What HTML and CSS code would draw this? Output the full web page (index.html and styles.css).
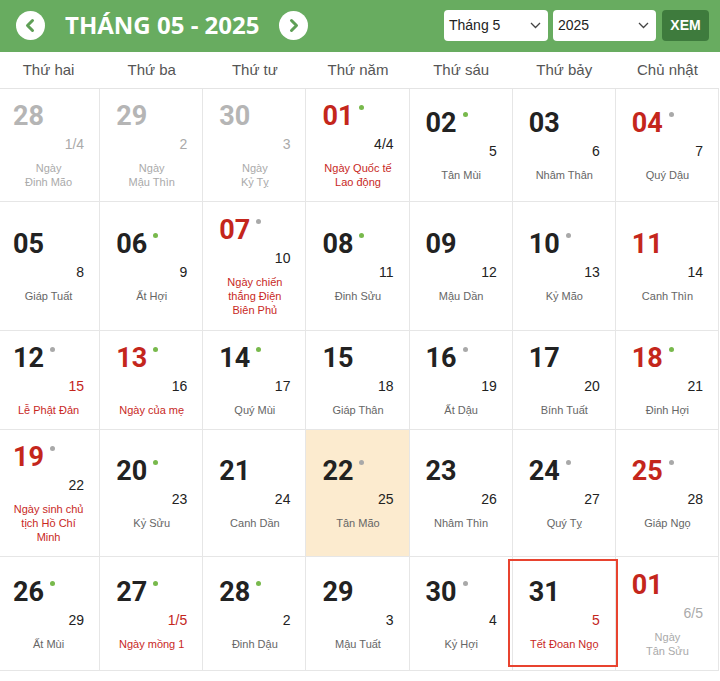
FILE: index.html
```html
<!DOCTYPE html>
<html lang="vi">
<head>
<meta charset="utf-8">
<title>Lịch tháng 05 - 2025</title>
<link rel="stylesheet" href="styles.css">
</head>
<body>
<div class="topbar">
  <span class="nav"><svg width="29" height="29" viewBox="0 0 29 29"><circle cx="14.5" cy="14.5" r="14.5" fill="#fff"/><path d="M16.5 9.5 L11.5 14.5 L16.5 19.5" fill="none" stroke="#5f9f56" stroke-width="3" stroke-linecap="round" stroke-linejoin="round"/></svg></span>
  <h1 class="title">THÁNG 05 - 2025</h1>
  <span class="nav"><svg width="29" height="29" viewBox="0 0 29 29"><circle cx="14.5" cy="14.5" r="14.5" fill="#fff"/><path d="M12.5 9.5 L17.5 14.5 L12.5 19.5" fill="none" stroke="#5f9f56" stroke-width="3" stroke-linecap="round" stroke-linejoin="round"/></svg></span>
  <div class="controls">
    <div class="select sel-month">Tháng 5<svg class="caret" width="11" height="7" viewBox="0 0 11 7"><path d="M1 1 L5.5 5.5 L10 1" fill="none" stroke="#444" stroke-width="1.3"/></svg></div>
    <div class="select sel-year">2025<svg class="caret" width="11" height="7" viewBox="0 0 11 7"><path d="M1 1 L5.5 5.5 L10 1" fill="none" stroke="#444" stroke-width="1.3"/></svg></div>
    <button class="btn">XEM</button>
  </div>
</div>

<div class="calendar">
  <div class="wd">Thứ hai</div><div class="wd">Thứ ba</div><div class="wd">Thứ tư</div><div class="wd">Thứ năm</div><div class="wd">Thứ sáu</div><div class="wd">Thứ bảy</div><div class="wd">Chủ nhật</div>

  <div class="cell out"><div class="num">28</div><div class="lunar">1/4</div><div class="txt">Ngày<br>Đinh Mão</div></div>
  <div class="cell out"><div class="num">29</div><div class="lunar">2</div><div class="txt">Ngày<br>Mậu Thìn</div></div>
  <div class="cell out"><div class="num">30</div><div class="lunar">3</div><div class="txt">Ngày<br>Kỷ Tỵ</div></div>
  <div class="cell"><div class="num red">01<i class="dot g"></i></div><div class="lunar">4/4</div><div class="txt hol">Ngày Quốc tế<br>Lao động</div></div>
  <div class="cell"><div class="num">02<i class="dot g"></i></div><div class="lunar">5</div><div class="txt">Tân Mùi</div></div>
  <div class="cell"><div class="num">03</div><div class="lunar">6</div><div class="txt">Nhâm Thân</div></div>
  <div class="cell"><div class="num red">04<i class="dot s"></i></div><div class="lunar">7</div><div class="txt">Quý Dậu</div></div>

  <div class="cell"><div class="num">05</div><div class="lunar">8</div><div class="txt">Giáp Tuất</div></div>
  <div class="cell"><div class="num">06<i class="dot g"></i></div><div class="lunar">9</div><div class="txt">Ất Hợi</div></div>
  <div class="cell"><div class="num red">07<i class="dot s"></i></div><div class="lunar">10</div><div class="txt hol">Ngày chiến<br>thắng Điện<br>Biên Phủ</div></div>
  <div class="cell"><div class="num">08<i class="dot g"></i></div><div class="lunar">11</div><div class="txt">Đinh Sửu</div></div>
  <div class="cell"><div class="num">09</div><div class="lunar">12</div><div class="txt">Mậu Dần</div></div>
  <div class="cell"><div class="num">10<i class="dot s"></i></div><div class="lunar">13</div><div class="txt">Kỷ Mão</div></div>
  <div class="cell"><div class="num red">11</div><div class="lunar">14</div><div class="txt">Canh Thìn</div></div>

  <div class="cell"><div class="num">12<i class="dot s"></i></div><div class="lunar red">15</div><div class="txt hol">Lễ Phật Đản</div></div>
  <div class="cell"><div class="num red">13<i class="dot g"></i></div><div class="lunar">16</div><div class="txt hol">Ngày của mẹ</div></div>
  <div class="cell"><div class="num">14<i class="dot g"></i></div><div class="lunar">17</div><div class="txt">Quý Mùi</div></div>
  <div class="cell"><div class="num">15</div><div class="lunar">18</div><div class="txt">Giáp Thân</div></div>
  <div class="cell"><div class="num">16<i class="dot s"></i></div><div class="lunar">19</div><div class="txt">Ất Dậu</div></div>
  <div class="cell"><div class="num">17</div><div class="lunar">20</div><div class="txt">Bính Tuất</div></div>
  <div class="cell"><div class="num red">18<i class="dot g"></i></div><div class="lunar">21</div><div class="txt">Đinh Hợi</div></div>

  <div class="cell"><div class="num red">19<i class="dot s"></i></div><div class="lunar">22</div><div class="txt hol">Ngày sinh chủ<br>tịch Hồ Chí<br>Minh</div></div>
  <div class="cell"><div class="num">20<i class="dot g"></i></div><div class="lunar">23</div><div class="txt">Kỷ Sửu</div></div>
  <div class="cell"><div class="num">21</div><div class="lunar">24</div><div class="txt">Canh Dần</div></div>
  <div class="cell today"><div class="num">22<i class="dot s"></i></div><div class="lunar">25</div><div class="txt">Tân Mão</div></div>
  <div class="cell"><div class="num">23</div><div class="lunar">26</div><div class="txt">Nhâm Thìn</div></div>
  <div class="cell"><div class="num">24<i class="dot s"></i></div><div class="lunar">27</div><div class="txt">Quý Tỵ</div></div>
  <div class="cell"><div class="num red">25<i class="dot s"></i></div><div class="lunar">28</div><div class="txt">Giáp Ngọ</div></div>

  <div class="cell"><div class="num">26<i class="dot g"></i></div><div class="lunar">29</div><div class="txt">Ất Mùi</div></div>
  <div class="cell"><div class="num">27<i class="dot g"></i></div><div class="lunar red">1/5</div><div class="txt hol">Ngày mồng 1</div></div>
  <div class="cell"><div class="num">28<i class="dot g"></i></div><div class="lunar">2</div><div class="txt">Đinh Dậu</div></div>
  <div class="cell"><div class="num">29</div><div class="lunar">3</div><div class="txt">Mậu Tuất</div></div>
  <div class="cell"><div class="num">30<i class="dot s"></i></div><div class="lunar">4</div><div class="txt">Kỷ Hợi</div></div>
  <div class="cell selected"><div class="num">31</div><div class="lunar red">5</div><div class="txt hol">Tết Đoan Ngọ</div></div>
  <div class="cell out"><div class="num red">01</div><div class="lunar">6/5</div><div class="txt">Ngày<br>Tân Sửu</div></div>
</div>
</body>
</html>
```

FILE: styles.css
```css
html, body {
  margin: 0;
  padding: 0;
  background: #fff;
  overflow: hidden;
}
body {
  width: 720px;
  font-family: "Liberation Sans", Arial, sans-serif;
}

.topbar {
  height: 52px;
  box-sizing: border-box;
  background: #68ac60;
  display: flex;
  align-items: center;
  padding: 0 11px 2px 16px;
}
.nav {
  width: 29px;
  height: 29px;
  display: block;
}
.nav svg { display: block; }
.title {
  margin: 0 20px;
  font-family: "Open Sans", sans-serif;
  font-weight: 700;
  font-size: 24px;
  line-height: 30px;
  color: #fff;
  letter-spacing: 0;
}
.controls {
  margin-left: auto;
  display: flex;
  align-items: center;
}
.select {
  height: 31px;
  box-sizing: border-box;
  background: #fff;
  border-radius: 4px;
  display: flex;
  align-items: center;
  justify-content: space-between;
  padding: 0 7px 0 5px;
  font-size: 14px;
  color: #222;
}
.sel-month { width: 104px; }
.sel-year { width: 103px; margin-left: 5px; }
.caret { display: block; }
.btn {
  margin-left: 6px;
  width: 47px;
  height: 31px;
  border: 0;
  border-radius: 4px;
  background: #3e7b3d;
  color: #fff;
  font-family: "Liberation Sans", Arial, sans-serif;
  font-weight: 700;
  font-size: 14px;
  padding: 0;
}

.calendar {
  width: 722px;
  margin-left: -3px;
  display: grid;
  grid-template-columns: repeat(7, 1fr);
  grid-template-rows: 37px 113px 129px 99px 127px 114px;
}
.wd {
  display: flex;
  align-items: center;
  justify-content: center;
  font-size: 15px;
  color: #555;
  border-bottom: 1px solid #e4e4e4;
  padding-bottom: 1px;
}
.cell {
  position: relative;
  display: flex;
  flex-direction: column;
  justify-content: center;
  padding: 0 15px 0 16px;
  border-right: 1px solid #e6e6e6;
  border-bottom: 1px solid #e6e6e6;
  min-width: 0;
}
.num {
  display: flex;
  align-items: flex-start;
  font-family: Roboto, "Liberation Sans", sans-serif;
  font-weight: 700;
  font-size: 27px;
  line-height: 30px;
  color: #222;
}
.dot {
  width: 5px;
  height: 5px;
  border-radius: 50%;
  margin-left: 6px;
  margin-top: 4px;
}
.dot.g { background: #78b94c; }
.dot.s { background: #a9a9a9; }
.lunar {
  margin-top: 4px;
  text-align: right;
  font-size: 14px;
  line-height: 18px;
  color: #222;
}
.txt {
  margin: 8px -12px 0;
  text-align: center;
  font-size: 11px;
  line-height: 14px;
  color: #666;
}
.red { color: #c4261c; }
.num.red { color: #c4261c; }
.txt.hol { color: #c8281e; }

.out .num { color: #b5b5b5; }
.out .num.red { color: #c4261c; }
.out .lunar { color: #aaa; }
.out .txt { color: #aaa; }

.today { background: #fcebcf; }
.selected::after {
  content: "";
  position: absolute;
  left: -5px;
  right: -3px;
  top: 2px;
  bottom: 3px;
  border: 2px solid #e8432f;
}
```
